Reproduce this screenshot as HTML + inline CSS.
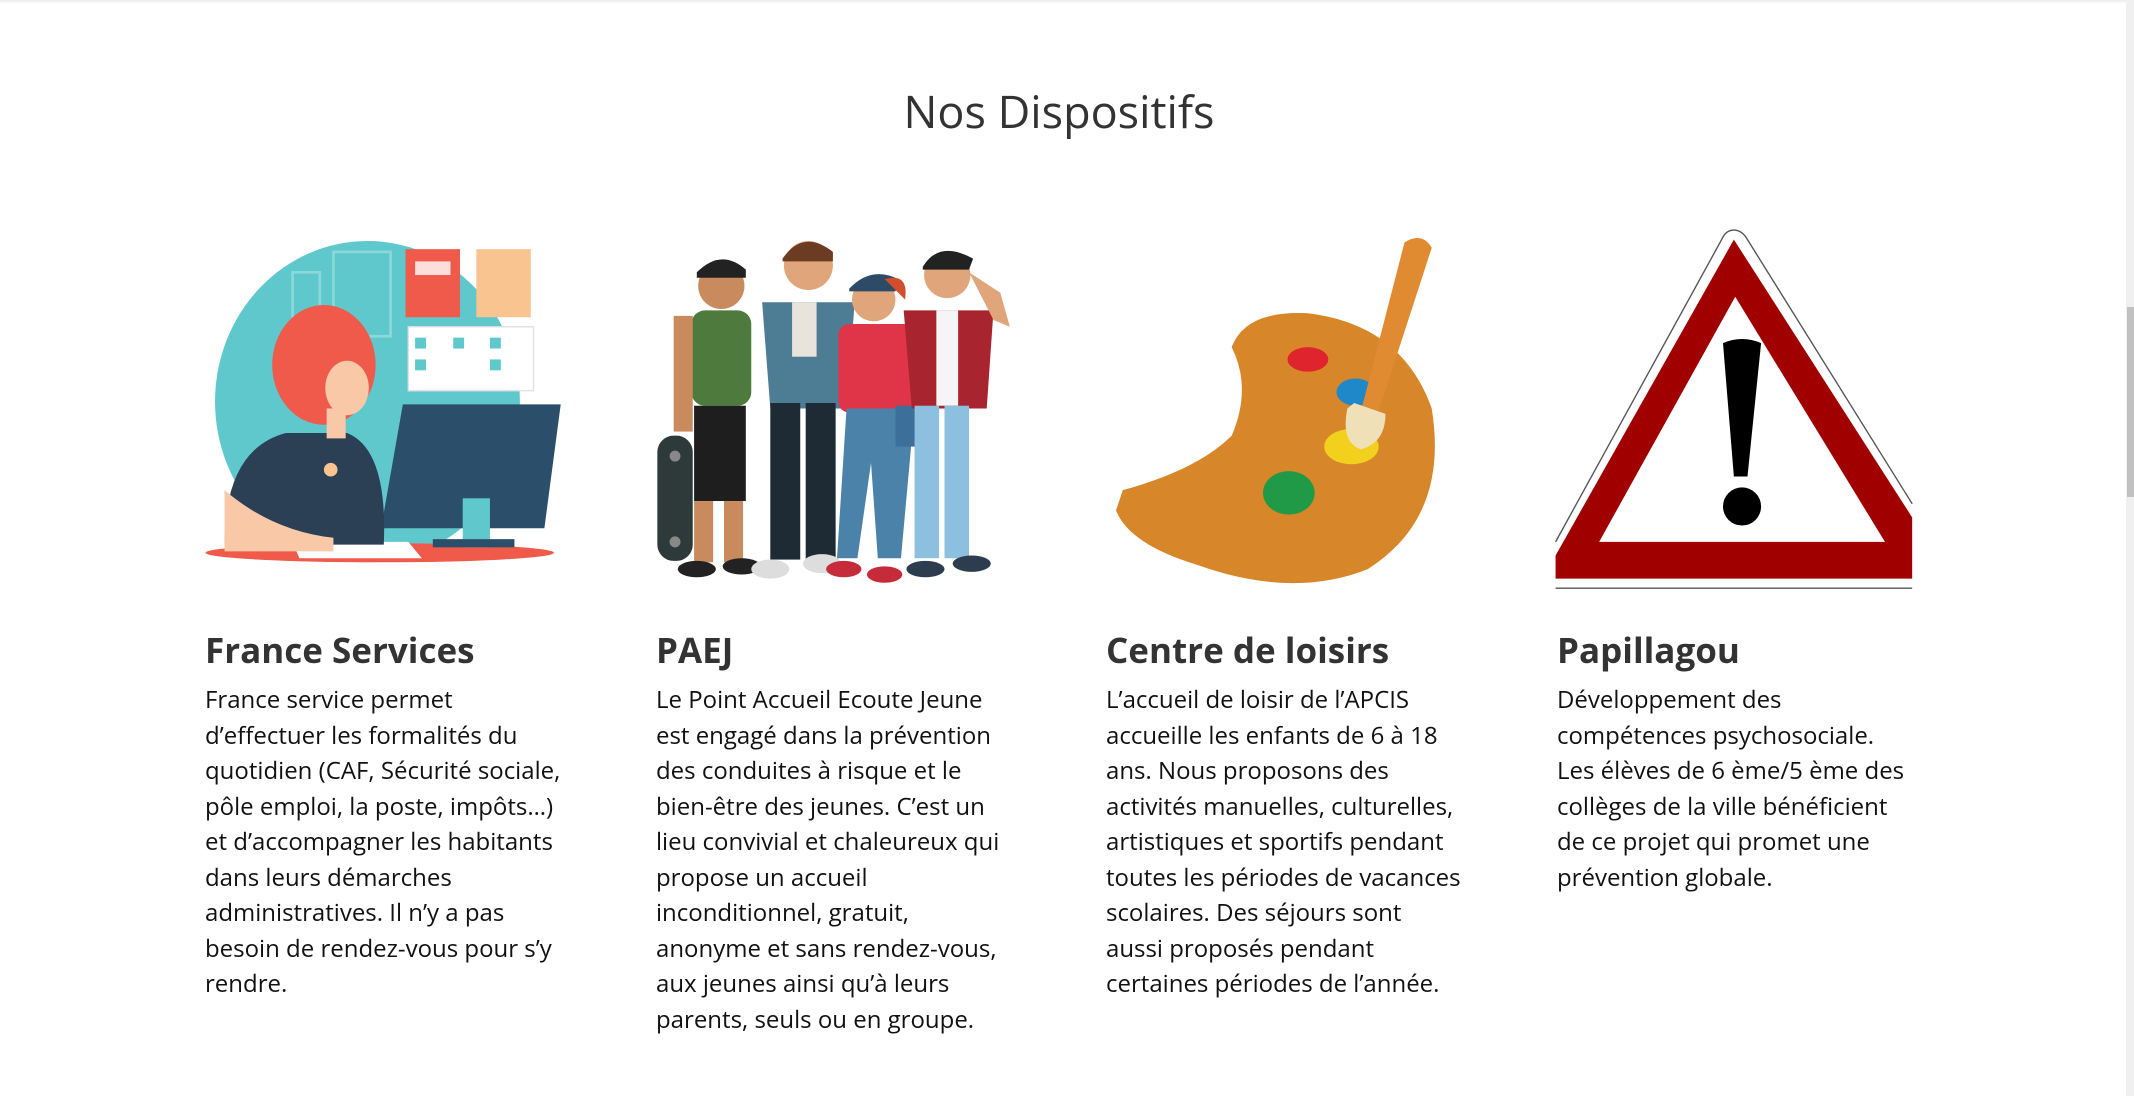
<!DOCTYPE html>
<html><head><meta charset="utf-8"><style>
html,body{margin:0;padding:0;background:#fff;width:2134px;height:1096px;overflow:hidden;position:relative;font-family:"Open Sans","Liberation Sans",sans-serif}
.topsh{position:absolute;left:0;top:0;width:2126px;height:4px;background:linear-gradient(#ececec,#fff)}
.sb{position:absolute;left:2126px;top:0;width:8px;height:1096px;background:#f0f0f0}
.sb div{position:absolute;left:1px;top:307px;width:7px;height:190px;background:#c1c1c1}
h1{position:absolute;left:0;width:2118px;top:82px;margin:0;text-align:center;font-weight:400;font-size:45px;color:#333;line-height:60px}
.col{position:absolute;top:626px;width:380px}
.col h2{margin:0;font-size:35px;font-weight:700;color:#333;line-height:50px;height:56px}
.col p{margin:0;font-size:24px;line-height:35.5px;color:#111;white-space:nowrap}
svg.art{position:absolute;left:0;top:0}
</style></head><body>
<div class="topsh"></div>
<div class="sb"><div></div></div>
<h1>Nos Dispositifs</h1>
<svg class="art" width="2134" height="1096" viewBox="0 0 1568 805" preserveAspectRatio="none">
<ellipse cx="270" cy="295" rx="112" ry="118" fill="#5ec8cd"/>
<rect x="215" y="200" width="20" height="60" fill="none" stroke="#8ad8d8" stroke-width="2"/>
<rect x="245" y="185" width="42" height="62" fill="none" stroke="#8ad8d8" stroke-width="2"/>
<rect x="298" y="183" width="40" height="50" fill="#f05a4a"/>
<rect x="305" y="192" width="26" height="10" fill="#fff" opacity=".8"/>
<rect x="350" y="183" width="40" height="50" fill="#f9c48f"/>
<rect x="300" y="240" width="92" height="47" fill="#fff" stroke="#e0e0e0"/>
<g fill="#5ec8cd"><rect x="305" y="248" width="8" height="8"/><rect x="305" y="264" width="8" height="8"/><rect x="333" y="248" width="8" height="8"/><rect x="360" y="248" width="8" height="8"/><rect x="360" y="264" width="8" height="8"/></g>
<ellipse cx="279" cy="406" rx="128" ry="7" fill="#f05a4a"/>
<polygon points="296,297 412,297 400,388 280,388" fill="#2b4f6a"/>
<rect x="340" y="366" width="20" height="36" fill="#5ec8cd"/>
<rect x="318" y="396" width="60" height="6" fill="#2b4f6a"/>
<polygon points="215,398 300,398 310,410 220,410" fill="#fff"/>
<path d="M165,400 Q165,330 210,318 L255,318 Q285,330 282,400 Z" fill="#2b3f55"/>
<ellipse cx="238" cy="268" rx="38" ry="44" fill="#f05a4a"/>
<ellipse cx="255" cy="285" rx="16" ry="20" fill="#f9c8a6"/>
<rect x="240" y="300" width="14" height="22" fill="#f9c8a6"/>
<path d="M165,360 Q200,390 245,395 L245,405 L165,405 Z" fill="#f9c8a6"/>
<circle cx="243" cy="345" r="5" fill="#f9c48f"/>
<g>
<rect x="483" y="320" width="26" height="92" rx="12" fill="#2e3a3a"/>
<circle cx="496" cy="335" r="4" fill="#888"/><circle cx="496" cy="398" r="4" fill="#888"/>
<circle cx="530" cy="210" r="17" fill="#c98b5e"/><path d="M512,200 Q530,182 548,198 L548,204 L512,204Z" fill="#222"/>
<rect x="508" y="228" width="44" height="70" rx="10" fill="#4e7a3e"/>
<rect x="510" y="298" width="38" height="70" fill="#1e1e1e"/>
<rect x="510" y="368" width="14" height="45" fill="#c98b5e"/><rect x="532" y="368" width="14" height="45" fill="#c98b5e"/>
<rect x="495" y="232" width="14" height="85" fill="#c98b5e"/>
<ellipse cx="512" cy="418" rx="14" ry="6" fill="#222"/><ellipse cx="545" cy="416" rx="14" ry="6" fill="#222"/>
<circle cx="594" cy="195" r="18" fill="#e0a57a"/><path d="M575,190 Q590,168 612,185 L612,192 L575,192Z" fill="#6b3b22"/>
<path d="M560,222 L628,222 L622,300 L566,300Z" fill="#4d7c95"/>
<rect x="582" y="222" width="18" height="40" fill="#e8e4dc"/>
<rect x="566" y="296" width="22" height="115" fill="#1e2a34"/><rect x="592" y="296" width="22" height="115" fill="#1e2a34"/>
<ellipse cx="566" cy="418" rx="14" ry="7" fill="#ddd"/><ellipse cx="604" cy="414" rx="14" ry="7" fill="#ddd"/>
<circle cx="642" cy="220" r="16" fill="#e0a57a"/><path d="M624,212 Q640,195 660,205 L658,214 L624,214Z" fill="#2d4a66"/><path d="M650,205 Q668,200 665,220Z" fill="#d24d2c"/>
<rect x="616" y="238" width="56" height="65" rx="8" fill="#e03448"/>
<path d="M622,300 L672,300 L662,410 L645,410 L640,340 L630,410 L615,410Z" fill="#4a82aa"/>
<ellipse cx="620" cy="418" rx="13" ry="6" fill="#c62b3a"/><ellipse cx="650" cy="422" rx="13" ry="6" fill="#c62b3a"/>
<rect x="658" y="298" width="25" height="30" fill="#3c6f99"/>
<circle cx="696" cy="202" r="17" fill="#e0a57a"/><path d="M678,196 Q690,176 715,190 L712,198 L678,198Z" fill="#222"/>
<path d="M664,228 L730,228 L725,300 L670,300Z" fill="#a8242e"/>
<rect x="688" y="228" width="16" height="70" fill="#f5f5f5"/>
<rect x="672" y="298" width="18" height="112" fill="#8cc0de"/><rect x="694" y="298" width="18" height="112" fill="#8cc0de"/>
<path d="M712,200 L730,235 L742,240 L735,215Z" fill="#e0a57a"/>
<ellipse cx="680" cy="418" rx="14" ry="6" fill="#2d3c4e"/><ellipse cx="714" cy="414" rx="14" ry="6" fill="#2d3c4e"/>
</g>
<path d="M825,360 Q880,345 905,320 Q920,285 905,255 Q915,228 960,230 Q1030,238 1052,300 Q1065,380 1005,418 Q950,440 880,415 Q830,400 820,375 Z" fill="#d8862a"/>
<ellipse cx="961" cy="264" rx="15" ry="9" fill="#e0242e"/>
<ellipse cx="996" cy="288" rx="14" ry="10" fill="#1e88c8"/>
<ellipse cx="993" cy="328" rx="20" ry="13" fill="#f2d11e"/>
<ellipse cx="947" cy="362" rx="19" ry="16" fill="#219a47"/>
<path d="M1032,178 Q1045,170 1052,182 L1012,305 L1000,302 Z" fill="#e08a32"/>
<path d="M995,296 L1018,304 Q1018,325 1000,330 Q985,325 990,300Z" fill="#f0e0b8"/>
<path d="M1274,169 Q1268,169 1265,176 L1143,398 M1274,169 Q1280,169 1284,176 L1405,370" fill="none" stroke="#555" stroke-width="1"/>
<path d="M1274,176 L1143,408 L1143,425 L1405,425 L1405,380 Z" fill="#a00000"/>
<polygon points="1275,218 1175,398 1385,398" fill="#fff"/>
<line x1="1143" y1="432" x2="1405" y2="432" stroke="#555" stroke-width="1"/>
<path d="M1266,252 Q1280,246 1294,252 L1284,350 L1274,350 Z" fill="#000"/>
<circle cx="1280" cy="372" r="14" fill="#000"/>
</svg>
<div class="col" style="left:205px"><h2>France Services</h2><p>France service permet<br>d’effectuer les formalités du<br>quotidien (CAF, Sécurité sociale,<br>pôle emploi, la poste, impôts…)<br>et d’accompagner les habitants<br>dans leurs démarches<br>administratives. Il n’y a pas<br>besoin de rendez-vous pour s’y<br>rendre.</p></div>
<div class="col" style="left:656px"><h2>PAEJ</h2><p>Le Point Accueil Ecoute Jeune<br>est engagé dans la prévention<br>des conduites à risque et le<br>bien-être des jeunes. C’est un<br>lieu convivial et chaleureux qui<br>propose un accueil<br>inconditionnel, gratuit,<br>anonyme et sans rendez-vous,<br>aux jeunes ainsi qu’à leurs<br>parents, seuls ou en groupe.</p></div>
<div class="col" style="left:1106px"><h2>Centre de loisirs</h2><p>L’accueil de loisir de l’APCIS<br>accueille les enfants de 6 à 18<br>ans. Nous proposons des<br>activités manuelles, culturelles,<br>artistiques et sportifs pendant<br>toutes les périodes de vacances<br>scolaires. Des séjours sont<br>aussi proposés pendant<br>certaines périodes de l’année.</p></div>
<div class="col" style="left:1557px"><h2>Papillagou</h2><p>Développement des<br>compétences psychosociale.<br>Les élèves de 6 ème/5 ème des<br>collèges de la ville bénéficient<br>de ce projet qui promet une<br>prévention globale.</p></div>
</body></html>
